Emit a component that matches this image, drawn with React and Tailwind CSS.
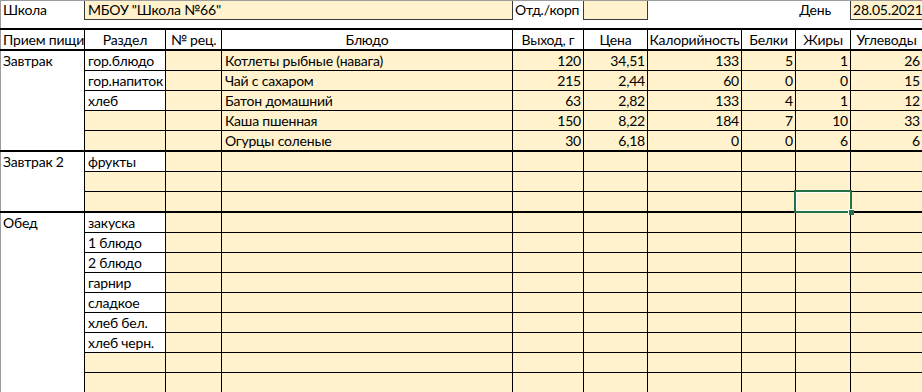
import React from "react";

const colW = [
  "w-[81px]",
  "w-[56px]",
  "w-[291px]",
  "w-[71px]",
  "w-[64px]",
  "w-[94px]",
  "w-[54px]",
  "w-[55px]",
  "flex-1",
];

function DataRow({ b, d, nums, last }) {
  const cells = [
    { t: b, white: !!b, align: "left" },
    { t: "", align: "left" },
    { t: d, align: "left" },
    ...(nums || ["", "", "", "", "", ""]).map((n) => ({ t: n, align: "right" })),
  ];
  return (
    <div
      className={
        "flex " + (last ? "h-[19px]" : "h-[20px] border-b border-black")
      }
    >
      {cells.map((c, i) => (
        <div
          key={i}
          className={
            colW[i] +
            " h-full shrink-0 overflow-hidden whitespace-nowrap leading-[19px] " +
            (i < 8 ? "border-r border-black " : "") +
            (c.white ? "bg-white " : "bg-[#fff2cc] ") +
            (c.align === "right" ? "text-right pr-[2px]" : "pl-[3px]")
          }
        >
          {c.t}
        </div>
      ))}
    </div>
  );
}

function Group({ name, rows }) {
  return (
    <div className="flex border-b-2 border-black">
      <div className="w-[85px] shrink-0 border-l border-l-[#9c9c9c] border-r border-r-black bg-white pl-[2px] leading-[19px] whitespace-nowrap">
        {name}
      </div>
      <div className="flex-1 flex flex-col">
        {rows.map((r, i) => (
          <DataRow key={i} {...r} last={i === rows.length - 1} />
        ))}
      </div>
    </div>
  );
}

export default function App() {
  const headers = [
    "Раздел",
    "№ рец.",
    "Блюдо",
    "Выход, г",
    "Цена",
    "Калорийность",
    "Белки",
    "Жиры",
    "Углеводы",
  ];
  const g1 = [
    { b: "гор.блюдо", d: "Котлеты рыбные (навага)", nums: ["120", "34,51", "133", "5", "1", "26"] },
    { b: "гор.напиток", d: "Чай с сахаром", nums: ["215", "2,44", "60", "0", "0", "15"] },
    { b: "хлеб", d: "Батон домашний", nums: ["63", "2,82", "133", "4", "1", "12"] },
    { b: "", d: "Каша пшенная", nums: ["150", "8,22", "184", "7", "10", "33"] },
    { b: "", d: "Огурцы соленые", nums: ["30", "6,18", "0", "0", "6", "6"] },
  ];
  const g2 = [{ b: "фрукты" }, { b: "" }, { b: "" }];
  const g3 = [
    { b: "закуска" },
    { b: "1 блюдо" },
    { b: "2 блюдо" },
    { b: "гарнир" },
    { b: "сладкое" },
    { b: "хлеб бел." },
    { b: "хлеб черн." },
    { b: "" },
    { b: "" },
  ];
  return (
    <div className="relative w-[922px] h-[392px] overflow-hidden bg-white text-black text-[14px] tracking-[-0.2px] font-['Lato','Noto_Sans',sans-serif]">
      {/* Row 1 */}
      <div className="flex h-[20px] border-t border-[#9c9c9c] leading-[18px]">
        <div className="w-[84px] shrink-0 border-l border-[#9c9c9c] pl-[2px]">Школа</div>
        <div className="w-[429px] shrink-0 bg-[#fff2cc] border-l border-r border-b border-[#3a3a3a] pl-[3px] whitespace-nowrap">
          МБОУ "Школа №66"
        </div>
        <div className="w-[70px] shrink-0 pl-[2px] whitespace-nowrap">Отд./корп</div>
        <div className="w-[65px] shrink-0 bg-[#fff2cc] border-l border-r border-b border-[#3a3a3a]"></div>
        <div className="w-[202px] shrink-0 flex justify-end pr-[19px]">День</div>
        <div className="flex-1 bg-[#fff2cc] border-l border-b border-[#3a3a3a] pl-[2px] whitespace-nowrap">
          28.05.2021
        </div>
      </div>
      {/* spacer */}
      <div className="h-[8px] border-l border-[#9c9c9c]"></div>
      {/* header */}
      <div className="flex h-[23px] border-t-2 border-b-2 border-black bg-white leading-[19px]">
        <div className="w-[85px] shrink-0 border-l border-l-[#9c9c9c] border-r border-r-black pl-[2px] whitespace-nowrap overflow-hidden">
          Прием пищи
        </div>
        {headers.map((h, i) => (
          <div
            key={i}
            className={
              colW[i] +
              " shrink-0 text-center whitespace-nowrap overflow-hidden " +
              (i < 8 ? "border-r border-black" : "")
            }
          >
            {h}
          </div>
        ))}
      </div>
      <Group name="Завтрак" rows={g1} />
      <Group name="Завтрак 2" rows={g2} />
      <Group name="Обед" rows={g3} />

      {/* selected cell */}
      <div className="absolute left-[794px] top-[190px] w-[58px] h-[23px] border-2 border-[#217346]">
        <div className="w-full h-full border border-white"></div>
      </div>
      <div className="absolute left-[848px] top-[209px] w-[6px] h-[6px] bg-[#217346] border-l border-t border-white"></div>
    </div>
  );
}
